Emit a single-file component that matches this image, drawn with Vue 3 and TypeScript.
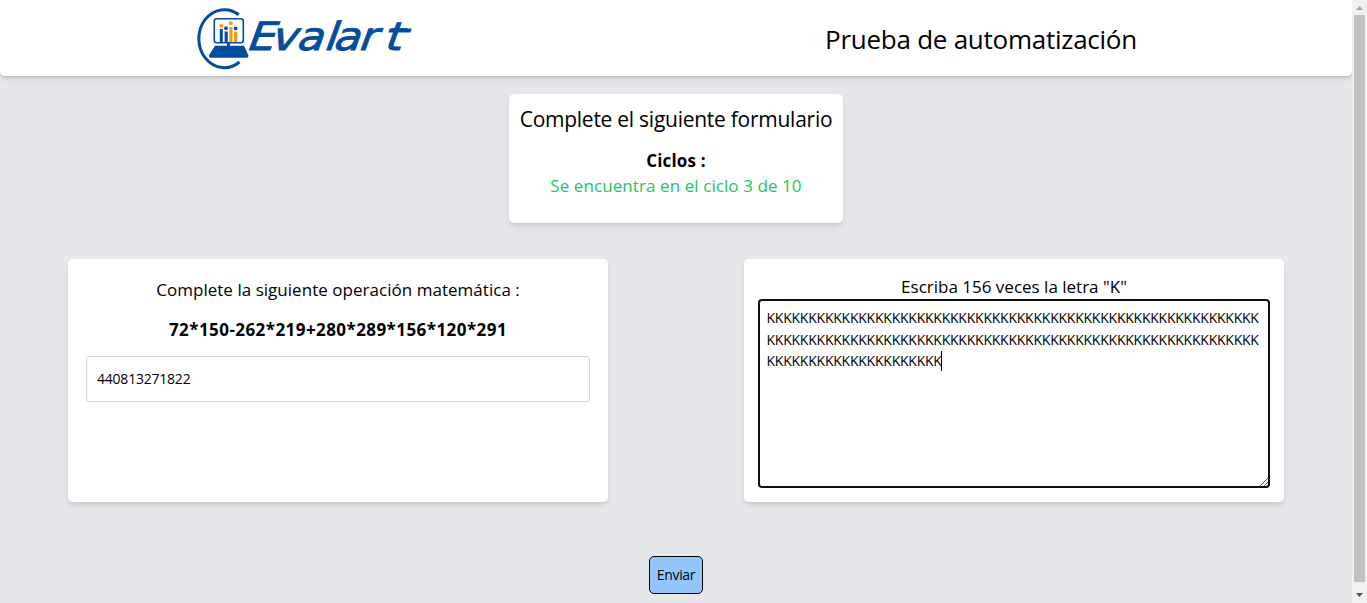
<script setup lang="ts">
import { ref } from 'vue'

const answer = ref('440813271822')
const rows: string[] = [59, 59, 21].map((n) => 'K'.repeat(n))
</script>

<template>
  <div class="window">
    <div class="page">
      <header class="bar">
        <div class="half">
          <svg class="logo" width="230" height="76" viewBox="190 0 230 76">
            <path d="M238.800 14.800A25.500 29 0 1 0 239.500 62" fill="none" stroke="#044c9c" stroke-width="3" />
            <rect x="214.300" y="18.800" width="29" height="24" rx="2.500" fill="#fff" stroke="#044c9c" stroke-width="1.600" />
            <path d="M227 43h3v3h-3zM215 45.700h29l4.300 9.500q.5 2.500-2 2.500h-35.300q-2.500 0-2-2.500z" fill="#044c9c" />
            <g fill="#f59b16">
              <circle cx="221.300" cy="26" r="2" /><circle cx="230.800" cy="23.300" r="2" />
              <rect x="229.300" y="27" width="3.200" height="15" /><rect x="234" y="31.500" width="3.200" height="10.500" />
            </g>
            <g fill="#044c9c">
              <circle cx="226" cy="28.200" r="1.900" /><circle cx="235.600" cy="28.400" r="1.900" />
              <rect x="219.800" y="29" width="3" height="13" /><rect x="224.600" y="31.500" width="3.200" height="10.500" />
            </g>
            <g transform="translate(0 50) skewX(-20)">
              <text class="brand" x="216.800 238 261 285.500 293.500 316 339" y="0" transform="scale(1.13 1)">Evalart</text>
              <path d="M382 -19.500H404" stroke="#044c9c" stroke-width="4" />
            </g>
          </svg>
        </div>
        <div class="half"><h1 class="title">Prueba de automatización</h1></div>
      </header>

      <section class="card intro">
        <h2 class="heading">Complete el siguiente formulario</h2>
        <p class="cycles">Ciclos :</p>
        <p class="status">Se encuentra en el ciclo 3 de 10</p>
      </section>

      <main class="panels">
        <section class="card panel math">
          <p class="question">Complete la siguiente operación matemática :</p>
          <p class="operation">72*150-262*219+280*289*156*120*291</p>
          <input v-model="answer" class="field" type="text" />
        </section>
        <section class="card panel letters">
          <p class="prompt">Escriba 156 veces la letra "K"</p>
          <div class="area">
            <div v-for="(row, i) in rows" :key="i" class="row">
              <span>{{ row }}</span><span v-if="i === rows.length - 1" class="caret"></span>
            </div>
            <svg class="grip" width="9" height="9" viewBox="0 0 9 9"><path d="M1 9L9 1M5 9L9 5" stroke="#555" fill="none" /></svg>
          </div>
        </section>
      </main>
      <button class="send" type="button">Enviar</button>
    </div>

    <div class="scroll">
      <svg class="arrow" width="15" height="15" viewBox="0 0 15 15"><path d="M4 10L7.500 6L11 10z" fill="#a3a3a3" /></svg>
      <div class="thumb"></div>
      <svg class="arrow" width="15" height="21" viewBox="0 0 15 21"><path d="M4 11L7.500 15L11 11z" fill="#505050" /></svg>
    </div>
  </div>
</template>

<style>
body { margin: 0; overflow: hidden; }
</style>

<style scoped>
* { box-sizing: border-box; }
.window { display: flex; width: 1367px; height: 603px; background: #e5e7eb; color: #000; font-family: "Open Sans", "Noto Sans", sans-serif; }
.page { width: 1352px; height: 603px; display: flex; flex-direction: column; align-items: center; }
h1, h2, p { margin: 0; font-weight: 400; white-space: nowrap; }
.bar { width: 1352px; height: 76px; flex: none; display: flex; background: #fff; border-radius: 0 0 5px 5px; box-shadow: 0 4px 6px -1px rgba(0,0,0,.1), 0 2px 4px -2px rgba(0,0,0,.2); }
.half { flex: 1; display: flex; align-items: center; justify-content: center; padding-right: 66px; }
.logo { display: block; flex: none; }
.brand { font: 400 39px "DejaVu Sans", sans-serif; fill: #044c9c; stroke: #044c9c; stroke-width: .9px; }
.title { font-size: 26px; line-height: 36px; margin-top: 2px; letter-spacing: -.26px; }
.card { background: #fff; border-radius: 5px; box-shadow: 0 4px 6px -1px rgba(0,0,0,.1), 0 2px 4px -2px rgba(0,0,0,.1); }
.intro { width: 334px; height: 129px; margin-top: 18px; padding-top: 9px; display: flex; flex-direction: column; align-items: center; flex: none; }
.heading { font-size: 21px; line-height: 32px; letter-spacing: -.26px; }
.cycles { margin-top: 13px; font-size: 17px; line-height: 25px; font-weight: 700; letter-spacing: .15px; }
.status { font-size: 17px; line-height: 25px; color: #22c55e; letter-spacing: .08px; }
.panels { width: 1216px; margin-top: 36px; display: flex; justify-content: space-between; }
.panel { width: 540px; height: 243px; display: flex; flex-direction: column; align-items: center; }
.math { padding-top: 18px; }
.question, .operation, .prompt { font-size: 17px; line-height: 25px; }
.question { letter-spacing: .03px; }
.operation { margin-top: 15px; font-weight: 700; letter-spacing: .43px; }
.field { width: 504px; height: 46px; margin-top: 14px; padding: 0 10px 2px; border: 1px solid #d1d5db; border-radius: 3px; font: 14px "Open Sans", sans-serif; letter-spacing: -.22px; color: #000; outline: none; }
.letters { padding-top: 15px; }
.area { position: relative; width: 512px; height: 189px; border: 2px solid #101010; border-radius: 4px; background: #fff; padding: 6px 6.500px; }
.row { display: flex; align-items: center; height: 21.600px; font-size: 14px; letter-spacing: -.23px; white-space: nowrap; color: #000; }
.caret { width: 1px; height: 20px; margin-left: -1px; background: #000; }
.grip { position: absolute; right: 0; bottom: 0; }
.send { width: 54px; height: 38px; margin-top: 54px; padding: 0 0 2px; border: 1px solid #000; border-radius: 5px; background: #93c5fd; font: 14px "Open Sans", sans-serif; letter-spacing: -.35px; color: #000; flex: none; }
.scroll { width: 15px; height: 603px; background: #f1f1f1; display: flex; flex-direction: column; align-items: center; }
.arrow { display: block; flex: none; }
.thumb { width: 11px; flex: 1; background: #c1c1c1; }
</style>
